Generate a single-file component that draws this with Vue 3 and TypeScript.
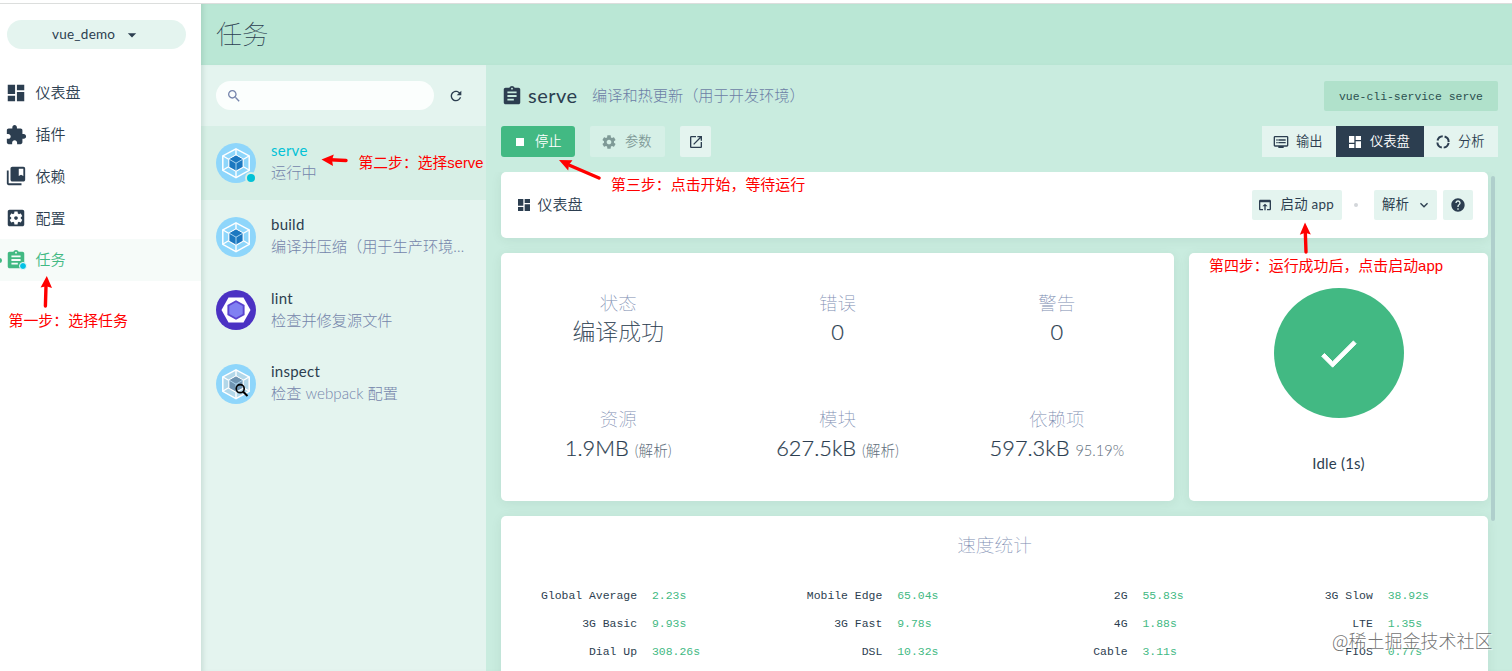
<script setup lang="ts">
const icons = {
  dashboard: 'M3 13h8V3H3v10zm0 8h8v-6H3v6zm10 0h8V11h-8v10zm0-18v6h8V3h-8z',
  plugin: 'M20.5 11H19V7c0-1.1-.9-2-2-2h-4V3.5C13 2.12 11.88 1 10.5 1S8 2.12 8 3.5V5H4c-1.1 0-1.99.9-1.99 2v3.8H3.5c1.49 0 2.7 1.21 2.7 2.7s-1.21 2.7-2.7 2.7H2V20c0 1.1.9 2 2 2h3.8v-1.5c0-1.49 1.21-2.7 2.7-2.7 1.49 0 2.7 1.21 2.7 2.7V22H17c1.1 0 2-.9 2-2v-4h1.5c1.38 0 2.5-1.12 2.5-2.5S21.88 11 20.5 11z',
  book: 'M4 6H2v14c0 1.1.9 2 2 2h14v-2H4V6zM20 2H8c-1.1 0-2 .9-2 2v12c0 1.1.9 2 2 2h12c1.1 0 2-.9 2-2V4c0-1.1-.9-2-2-2zm0 10l-2.5-1.5L15 12V4h5v8z',
  config: 'M12 10c-1.1 0-2 .9-2 2s.9 2 2 2 2-.9 2-2-.9-2-2-2zm7-7H5c-1.11 0-2 .9-2 2v14c0 1.1.89 2 2 2h14c1.11 0 2-.9 2-2V5c0-1.1-.89-2-2-2zm-1.75 9c0 .23-.02.46-.05.68l1.48 1.16c.13.11.17.3.08.45l-1.4 2.42c-.09.15-.27.21-.43.15l-1.74-.7c-.36.28-.76.51-1.18.69l-.26 1.85c-.03.17-.18.3-.35.3h-2.8c-.17 0-.32-.13-.35-.29l-.26-1.85c-.43-.18-.82-.41-1.18-.69l-1.74.7c-.16.06-.34 0-.43-.15l-1.4-2.42c-.09-.15-.05-.34.08-.45l1.48-1.16c-.03-.23-.05-.46-.05-.69 0-.23.02-.46.05-.68l-1.48-1.16c-.13-.11-.17-.3-.08-.45l1.4-2.42c.09-.15.27-.21.43-.15l1.74.7c.36-.28.76-.51 1.18-.69l.26-1.85c.03-.17.18-.3.35-.3h2.8c.17 0 .32.13.35.29l.26 1.85c.43.18.82.41 1.18.69l1.74-.7c.16-.06.34 0 .43.15l1.4 2.42c.09.15.05.34-.08.45l-1.48 1.16c.03.23.05.46.05.69z',
  assignment: 'M19 3h-4.18C14.4 1.84 13.3 1 12 1c-1.3 0-2.4.84-2.82 2H5c-1.1 0-2 .9-2 2v14c0 1.1.9 2 2 2h14c1.1 0 2-.9 2-2V5c0-1.1-.9-2-2-2zm-7 0c.55 0 1 .45 1 1s-.45 1-1 1-1-.45-1-1 .45-1 1-1zm2 14H7v-2h7v2zm3-4H7v-2h10v2zm0-4H7V7h10v2z',
  search: 'M15.5 14h-.79l-.28-.27C15.41 12.59 16 11.11 16 9.5 16 5.91 13.09 3 9.5 3S3 5.91 3 9.5 5.91 16 9.5 16c1.61 0 3.09-.59 4.23-1.57l.27.28v.79l5 4.99L20.49 19l-4.99-5zm-6 0C7.01 14 5 11.99 5 9.5S7.01 5 9.5 5 14 7.01 14 9.5 11.99 14 9.5 14z',
  refresh: 'M17.65 6.35C16.2 4.9 14.21 4 12 4c-4.42 0-7.99 3.58-7.99 8s3.57 8 7.99 8c3.73 0 6.84-2.55 7.73-6h-2.08c-.82 2.33-3.04 4-5.65 4-3.31 0-6-2.69-6-6s2.69-6 6-6c1.66 0 3.14.69 4.22 1.78L13 11h7V4l-2.35 2.35z',
  gear: 'M19.43 12.98c.04-.32.07-.64.07-.98s-.03-.66-.07-.98l2.11-1.65c.19-.15.24-.42.12-.64l-2-3.46c-.12-.22-.39-.3-.61-.22l-2.49 1c-.52-.4-1.08-.73-1.69-.98l-.38-2.65C14.46 2.18 14.25 2 14 2h-4c-.25 0-.46.18-.49.42l-.38 2.65c-.61.25-1.17.59-1.69.98l-2.49-1c-.23-.09-.49 0-.61.22l-2 3.46c-.13.22-.07.49.12.64l2.11 1.65c-.04.32-.07.65-.07.98s.03.66.07.98l-2.11 1.65c-.19.15-.24.42-.12.64l2 3.46c.12.22.39.3.61.22l2.49-1c.52.4 1.08.73 1.69.98l.38 2.65c.03.24.24.42.49.42h4c.25 0 .46-.18.49-.42l.38-2.65c.61-.25 1.17-.59 1.69-.98l2.49 1c.23.09.49 0 .61-.22l2-3.46c.12-.22.07-.49-.12-.64l-2.11-1.65zM12 15.5c-1.93 0-3.5-1.57-3.5-3.5s1.57-3.5 3.5-3.5 3.5 1.57 3.5 3.5-1.57 3.5-3.5 3.5z',
  open: 'M19 19H5V5h7V3H5c-1.11 0-2 .9-2 2v14c0 1.1.89 2 2 2h14c1.1 0 2-.9 2-2v-7h-2v7zM14 3v2h3.59l-9.83 9.83 1.41 1.41L19 6.41V10h2V3h-7z',
  output: 'M21 3H3c-1.1 0-2 .9-2 2v12c0 1.1.9 2 2 2h5v2h8v-2h5c1.1 0 1.99-.9 1.99-2L23 5c0-1.1-.9-2-2-2zm0 14H3V5h18v12zm-2-9H8v2h11V8zm0 4H8v2h11v-2zM7 8H5v2h2V8zm0 4H5v2h2v-2z',
  browser: 'M19 4H5c-1.11 0-2 .9-2 2v12c0 1.1.89 2 2 2h4v-2H5V8h14v10h-4v2h4c1.1 0 2-.9 2-2V6c0-1.1-.89-2-2-2zm-7 6l-4 4h3v6h2v-6h3l-4-4z',
  help: 'M12 2C6.48 2 2 6.48 2 12s4.48 10 10 10 10-4.48 10-10S17.52 2 12 2zm1 17h-2v-2h2v2zm2.07-7.75l-.9.92C13.45 12.9 13 13.5 13 15h-2v-.5c0-1.1.45-2.1 1.17-2.83l1.24-1.26c.37-.36.59-.86.59-1.41 0-1.1-.9-2-2-2s-2 .9-2 2H8c0-2.21 1.79-4 4-4s4 1.79 4 4c0 .88-.36 1.68-.93 2.25z',
  chevron: 'M16.59 8.59L12 13.17 7.41 8.59 6 10l6 6 6-6z',
  caret: 'M7 10l5 5 5-5z',
  check: 'M9 16.17L4.83 12l-1.42 1.41L9 19 21 7l-1.41-1.41z',
}

interface NavItem { label: string; icon: string; active?: boolean }
const nav: NavItem[] = [
  { label: '仪表盘', icon: icons.dashboard },
  { label: '插件', icon: icons.plugin },
  { label: '依赖', icon: icons.book },
  { label: '配置', icon: icons.config },
  { label: '任务', icon: icons.assignment, active: true },
]

interface Task { name: string; desc: string; kind: 'webpack' | 'eslint' | 'inspect'; active?: boolean }
const tasks: Task[] = [
  { name: 'serve', desc: '运行中', kind: 'webpack', active: true },
  { name: 'build', desc: '编译并压缩（用于生产环境）', kind: 'webpack' },
  { name: 'lint', desc: '检查并修复源文件', kind: 'eslint' },
  { name: 'inspect', desc: '检查 webpack 配置', kind: 'inspect' },
]

interface Stat { label: string; value: string; extra?: string; cjk?: boolean }
const stats: Stat[] = [
  { label: '状态', value: '编译成功', cjk: true },
  { label: '错误', value: '0' },
  { label: '警告', value: '0' },
  { label: '资源', value: '1.9MB', extra: '(解析)' },
  { label: '模块', value: '627.5kB', extra: '(解析)' },
  { label: '依赖项', value: '597.3kB', extra: '95.19%' },
]

const speeds: [string, string][] = [
  ['Global Average', '2.23s'], ['Mobile Edge', '65.04s'], ['2G', '55.83s'], ['3G Slow', '38.92s'],
  ['3G Basic', '9.93s'], ['3G Fast', '9.78s'], ['4G', '1.88s'], ['LTE', '1.35s'],
  ['Dial Up', '308.26s'], ['DSL', '10.32s'], ['Cable', '3.11s'], ['FIOS', '0.77s'],
]
</script>

<template>
  <div class="page">
    <div class="topline"></div>
    <div class="shell">
      <aside class="sidebar">
        <div class="project">
          <span>vue_demo</span>
          <svg class="i20" viewBox="0 0 24 24"><path :d="icons.caret" /></svg>
        </div>
        <nav>
          <div v-for="n in nav" :key="n.label" class="nav-item" :class="{ active: n.active }">
            <span class="nav-icon">
              <svg viewBox="0 0 24 24"><path :d="n.icon" /></svg>
              <i v-if="n.active" class="nav-dot"></i>
            </span>
            <span class="nav-label">{{ n.label }}</span>
          </div>
        </nav>
      </aside>

      <main class="main">
        <header class="title">任务</header>
        <div class="body">
          <section class="tasks">
            <div class="toolbar">
              <div class="search"><svg class="i16" viewBox="0 0 24 24"><path :d="icons.search" /></svg></div>
              <svg class="i16 refresh" viewBox="0 0 24 24"><path :d="icons.refresh" /></svg>
            </div>
            <div v-for="t in tasks" :key="t.name" class="task" :class="{ active: t.active }">
              <div class="task-icon">
                <svg v-if="t.kind === 'eslint'" viewBox="0 0 40 40">
                  <circle cx="20" cy="20" r="20" fill="#4b32c3" />
                  <path d="M5.5 20L12.5 7.5h15L34.5 20l-7 12.5h-15z" fill="#fff" />
                  <path d="M20 10.2l8.6 4.9v9.8L20 29.8l-8.6-4.9v-9.8z" fill="#5a43cf" />
                  <path d="M20 12.2l6.7 3.9v7.8L20 27.8l-6.7-3.9v-7.8z" fill="#8080f2" />
                </svg>
                <svg v-else viewBox="0 0 40 40" :class="{ dim: t.kind === 'inspect' }">
                  <circle cx="20" cy="20" r="20" fill="#8ed6fb" />
                  <g class="hex">
                    <path d="M20 5.8l13.2 7.1v14.4L20 34.6 6.8 27.3V12.9z" class="shell-face" />
                    <path d="M20 6v7M7 13l6 3.5M33 13l-6 3.5M7 27l6-3.5M33 27l-6-3.5M20 27.5v7" class="edge" />
                    <path d="M20 12l7.2 4v8.2L20 28.3l-7.2-4.1V16z" class="cube" />
                    <path d="M20 12.6l6.6 3.6L20 20 13.4 16.2z" class="cube-top" />
                    <path d="M12.8 16l7.2 4.2 7.2-4.2M20 20.2v8.1" class="seam" />
                  </g>
                  <g v-if="t.kind === 'inspect'" fill="none" stroke="#000" stroke-width="1.7">
                    <circle cx="24.2" cy="24.7" r="4" /><path d="M27.2 27.7l4.3 4.3" stroke-width="2" />
                  </g>
                </svg>
                <i v-if="t.active" class="run-dot"></i>
              </div>
              <div class="task-text">
                <div class="task-name">{{ t.name }}</div>
                <div class="task-desc">{{ t.desc }}</div>
              </div>
            </div>
          </section>

          <section class="detail">
            <div class="detail-head">
              <svg class="i22" viewBox="0 0 24 24"><path :d="icons.assignment" /></svg>
              <span class="detail-name">serve</span>
              <span class="detail-desc">编译和热更新（用于开发环境）</span>
              <span class="command">vue-cli-service serve</span>
            </div>
            <div class="actions">
              <div class="btn stop"><i class="stop-square"></i><span>停止</span></div>
              <div class="btn params"><svg class="i16" viewBox="0 0 24 24"><path :d="icons.gear" /></svg><span>参数</span></div>
              <div class="btn square"><svg class="i16" viewBox="0 0 24 24"><path :d="icons.open" /></svg></div>
              <div class="tabs">
                <div class="tab"><svg class="i16" viewBox="0 0 24 24"><path :d="icons.output" /></svg><span>输出</span></div>
                <div class="tab on"><svg class="i16" viewBox="0 0 24 24"><path :d="icons.dashboard" /></svg><span>仪表盘</span></div>
                <div class="tab">
                  <svg class="i16" viewBox="0 0 24 24"><circle cx="12" cy="12" r="8.5" class="donut" /></svg><span>分析</span>
                </div>
              </div>
            </div>

            <div class="scroll">
              <div class="cards">
                <div class="card dash-head">
                  <svg class="i16" viewBox="0 0 24 24"><path :d="icons.dashboard" /></svg>
                  <span class="dash-title">仪表盘</span>
                  <div class="soft launch"><svg class="i16" viewBox="0 0 24 24"><path :d="icons.browser" /></svg><span>启动 app</span></div>
                  <i class="sep"></i>
                  <div class="soft parse"><span>解析</span><svg class="i16" viewBox="0 0 24 24"><path :d="icons.chevron" /></svg></div>
                  <div class="soft help"><svg class="i16" viewBox="0 0 24 24"><path :d="icons.help" /></svg></div>
                </div>
                <div class="row">
                  <div class="card stats">
                    <div v-for="s in stats" :key="s.label" class="stat">
                      <div class="stat-label">{{ s.label }}</div>
                      <div class="stat-value" :class="{ cjk: s.cjk }">{{ s.value }}<small v-if="s.extra">{{ s.extra }}</small></div>
                    </div>
                  </div>
                  <div class="card status">
                    <div class="disc"><svg viewBox="0 0 24 24"><path :d="icons.check" /></svg></div>
                    <div class="idle">Idle (1s)</div>
                  </div>
                </div>
                <div class="card speed">
                  <div class="speed-title">速度统计</div>
                  <div class="speed-grid">
                    <div v-for="s in speeds" :key="s[0]" class="speed-cell">
                      <span class="speed-label">{{ s[0] }}</span><span class="speed-value">{{ s[1] }}</span>
                    </div>
                  </div>
                </div>
              </div>
              <div class="thumb"></div>
            </div>
          </section>
        </div>
      </main>
    </div>

    <svg class="arrows" viewBox="0 0 1512 671">
      <g stroke="#f00" stroke-width="3.4" stroke-linecap="round">
        <path d="M45.4 306L46 286M346 160.5L330 159.8M599 178L570 165.5M1306 252L1305.3 232" />
      </g>
      <g fill="#f00">
        <path d="M46.8 276l5.2 12-5.6-1.8-5.8 1.2z" />
        <path d="M321.5 159.5l12.3-5-1.8 5.4 1 6z" />
        <path d="M559 160l13.5.2-3.5 4.6-.8 5.8z" />
        <path d="M1305 222.5l5.8 12-5.6-1.8-5.4 2z" />
      </g>
    </svg>
    <div class="note n1">第一步：选择任务</div>
    <div class="note n2">第二步：选择serve</div>
    <div class="note n3">第三步：点击开始，等待运行</div>
    <div class="note n4">第四步：运行成功后，点击启动app</div>
    <div class="watermark">@稀土掘金技术社区</div>
  </div>
</template>

<style>
body { margin: 0; overflow: hidden; }
</style>

<style scoped>
.page { position: relative; width: 1512px; height: 671px; overflow: hidden; background: #fff; color: #2c3e50; font-family: Lato, "Noto Sans CJK SC", sans-serif; font-size: 15px; line-height: 22px; display: flex; flex-direction: column; }
.page * { box-sizing: border-box; }
svg { display: block; flex: none; fill: currentColor; }
.i16 { width: 16px; height: 16px; }
.i20 { width: 20px; height: 20px; }
.i22 { width: 22px; height: 22px; }
.topline { height: 4px; flex: none; border-bottom: 1px solid #dcdedd; }
.shell { display: flex; flex: 1; min-height: 0; }
.sidebar { width: 201px; flex: none; background: #fff; }
.project { margin: 16px 15px 0 7px; width: 179px; height: 29px; border-radius: 15px; background: #e4f4ef; display: flex; align-items: center; padding-left: 45px; gap: 7px; font-size: 13.5px; letter-spacing: .25px; }
.project span { padding-bottom: 2px; }
nav { margin-top: 23px; }
.nav-item { height: 41.8px; display: flex; align-items: center; padding-left: 5px; gap: 8.5px; font-weight: 350; position: relative; }
.nav-item.active { background: #f6fbf9; color: #42b983; }
.nav-item.active::before { content: ""; position: absolute; left: -3px; top: 19px; width: 5px; height: 5px; border-radius: 50%; background: #42b983; }
.nav-icon { position: relative; }
.nav-icon svg { width: 22px; height: 22px; }
.nav-label { padding-bottom: 1.5px; }
.nav-dot { position: absolute; right: 0; bottom: 1px; width: 8px; height: 8px; border-radius: 50%; background: #03c2e6; border: 1px solid #f6fbf9; }

.main { flex: 1; min-width: 0; display: flex; flex-direction: column; background: #c9ecdf; box-shadow: inset 5px 0 5px -3px rgba(0, 60, 40, .12); }
.title { height: 61px; flex: none; padding: 0 15px; background: #bae7d5; font-size: 26.2px; line-height: 59px; font-weight: 100; font-family: "Noto Sans CJK SC", sans-serif; box-shadow: inset 5px 0 5px -3px rgba(0, 60, 40, .12); }
.body { display: flex; flex: 1; min-height: 0; }
.tasks { width: 285px; flex: none; background: #e4f4ef; box-shadow: inset 5px 0 5px -3px rgba(0, 60, 40, .12); }
.toolbar { height: 61px; display: flex; align-items: center; padding-left: 15px; gap: 14px; }
.search { width: 218px; height: 29px; border-radius: 15px; background: #fbfefd; padding: 7px 0 0 10px; color: #7685ac; }
.refresh { color: #2c3e50; }
.task { height: 73.7px; display: flex; align-items: center; padding: 0 15px; gap: 15px; }
.task.active { background: rgba(66, 185, 131, .08); }
.task-icon { position: relative; width: 40px; height: 40px; flex: none; }
.task-icon svg { width: 40px; height: 40px; }
.shell-face { fill: #8ed6fb; stroke: #fff; stroke-width: 1.5; }
.edge { fill: none; stroke: #fff; stroke-width: 1.4; }
.cube { fill: #1c78c0; stroke: #fff; stroke-width: 1.2; }
.cube-top { fill: #1c78c0; }
.seam { fill: none; stroke: #b5dcf4; stroke-width: .9; }
.dim .shell-face { fill: #b2d7e9; }
.dim .cube, .dim .cube-top { fill: #6f94b1; }
.run-dot { position: absolute; right: -1px; bottom: -1px; width: 12px; height: 12px; border-radius: 50%; background: #03c2d6; border: 2px solid #d9efe5; }
.task-text { flex: 1; min-width: 0; padding-bottom: 3px; }
.task-name { letter-spacing: .25px; }
.task-desc { width: 197px; font-size: 15.2px; color: #7485ab; font-weight: 300; white-space: nowrap; overflow: hidden; text-overflow: ellipsis; }
.task.active .task-name { color: #03c2d6; }

.detail { flex: 1; min-width: 0; display: flex; flex-direction: column; padding: 16px 14px 0 15px; }
.detail-head { height: 30px; flex: none; display: flex; align-items: center; }
.detail-name { margin-left: 5px; font-size: 20px; letter-spacing: .5px; width: 64px; padding-bottom: 3px; }
.detail-desc { color: #6c7ea6; font-weight: 300; font-size: 15.2px; padding-bottom: 2px; }
.command { margin-left: auto; height: 30px; width: 174px; text-align: center; background: #b0e1cb; border-radius: 2px; font: 11.43px/32px "Liberation Mono", monospace; color: #2c5050; }
.actions { margin-top: 15px; height: 31px; display: flex; gap: 15px; flex: none; }
.btn { display: flex; align-items: center; border-radius: 2px; font-size: 13.3px; font-weight: 350; }
.btn span, .tab span, .soft span, .dash-title { padding-bottom: 2px; }
.stop { width: 74px; padding-left: 15px; gap: 11px; background: #42b983; color: #fff; border-radius: 3px; }
.stop-square { width: 8px; height: 8px; background: #fff; }
.params { width: 75px; padding-left: 11px; gap: 8px; background: #d6f0e7; color: #7f9a97; }
.square { width: 31px; justify-content: center; background: #e4f4ef; }
.tabs { margin-left: auto; display: flex; }
.tab { width: 74px; display: flex; align-items: center; padding-left: 11px; gap: 7px; background: #e4f4ef; font-size: 13.3px; font-weight: 350; }
.tab.on { width: 88px; background: #2c3e50; color: #fff; }
.donut { fill: none; stroke: currentColor; stroke-width: 3; stroke-dasharray: 10.4 2.95; stroke-dashoffset: -1.5; }

.scroll { margin-top: 15px; flex: 1; min-height: 0; display: flex; overflow: hidden; margin-left: -10px; padding-left: 10px; }
.cards { width: 987px; flex: none; }
.card { background: #fff; border-radius: 5px; box-shadow: 0 2px 12px rgba(0, 60, 40, .07); }
.dash-head { height: 66px; display: flex; align-items: center; padding: 0 15px; }
.dash-title { margin-left: 5.5px; font-weight: 350; }
.soft { height: 30px; background: #e4f4ef; border-radius: 2px; display: flex; align-items: center; font-size: 13.4px; }
.launch { width: 90px; margin-left: auto; padding-left: 5px; gap: 7.5px; letter-spacing: .3px; white-space: nowrap; }
.sep { width: 4px; height: 4px; border-radius: 50%; background: #d3d6da; margin: 0 16px 0 12px; }
.parse { width: 63px; padding-left: 8px; gap: 7px; }
.help { width: 30px; justify-content: center; margin-left: 6px; }
.row { margin-top: 15px; display: flex; gap: 15px; }
.stats { width: 673px; height: 248px; padding: 35px 7.5px 0; display: grid; grid-template-columns: repeat(3, 1fr); grid-auto-rows: 116px; }
.stat { text-align: center; }
.stat-label { font-size: 18.5px; line-height: 28px; font-weight: 100; color: #7a8bb0; font-family: "Noto Sans CJK SC", sans-serif; }
.stat-value { font-size: 21.8px; line-height: 32px; font-weight: 300; -webkit-text-stroke: .2px #2c3e50; }
.stat-value.cjk { font-size: 22.8px; line-height: 30px; font-weight: 100; font-family: "Noto Sans CJK SC", sans-serif; }
.stat-value small { font-size: 14.6px; margin-left: 6px; color: #626f7d; -webkit-text-stroke: 0; }
.status { width: 299px; display: flex; flex-direction: column; align-items: center; padding-top: 35px; }
.disc { width: 130px; height: 130px; border-radius: 50%; background: #42b983; color: #fff; display: flex; align-items: center; justify-content: center; }
.disc svg { width: 47px; height: 47px; stroke: #fff; stroke-width: .5; }
.idle { margin-top: 34px; letter-spacing: .2px; }
.speed { margin-top: 15px; height: 300px; padding: 13px 3px 0; }
.speed-title { text-align: center; font-size: 18.7px; line-height: 30px; font-weight: 100; color: #7a8bb0; font-family: "Noto Sans CJK SC", sans-serif; }
.speed-grid { margin-top: 23px; display: grid; grid-template-columns: repeat(4, 1fr); grid-auto-rows: 28px; font: 11.43px/28px "Liberation Mono", monospace; }
.speed-cell { display: flex; gap: 15px; }
.speed-label { width: 133px; text-align: right; }
.speed-value { color: #42b983; }
.thumb { margin: 4px 0 0 3px; width: 4px; height: 345px; background: #afcfcc; flex: none; border-radius: 2px; }

.arrows { position: absolute; left: 0; top: 0; width: 1512px; height: 671px; }
.note { position: absolute; color: #f00; font-family: "Liberation Sans", "Noto Sans CJK SC", sans-serif; font-size: 14.95px; line-height: 20px; white-space: nowrap; }
.n1 { left: 8.5px; top: 311px; }
.n2 { left: 358.5px; top: 153px; font-size: 14.8px; }
.n3 { left: 611px; top: 175px; }
.n4 { left: 1209px; top: 256px; }
.watermark { position: absolute; left: 1332px; top: 626px; font: 300 18px/28px "Noto Sans CJK SC", sans-serif; color: rgba(90, 90, 90, .85); white-space: nowrap; text-shadow: 1px 1px 1px rgba(255, 255, 255, .8); }
</style>
